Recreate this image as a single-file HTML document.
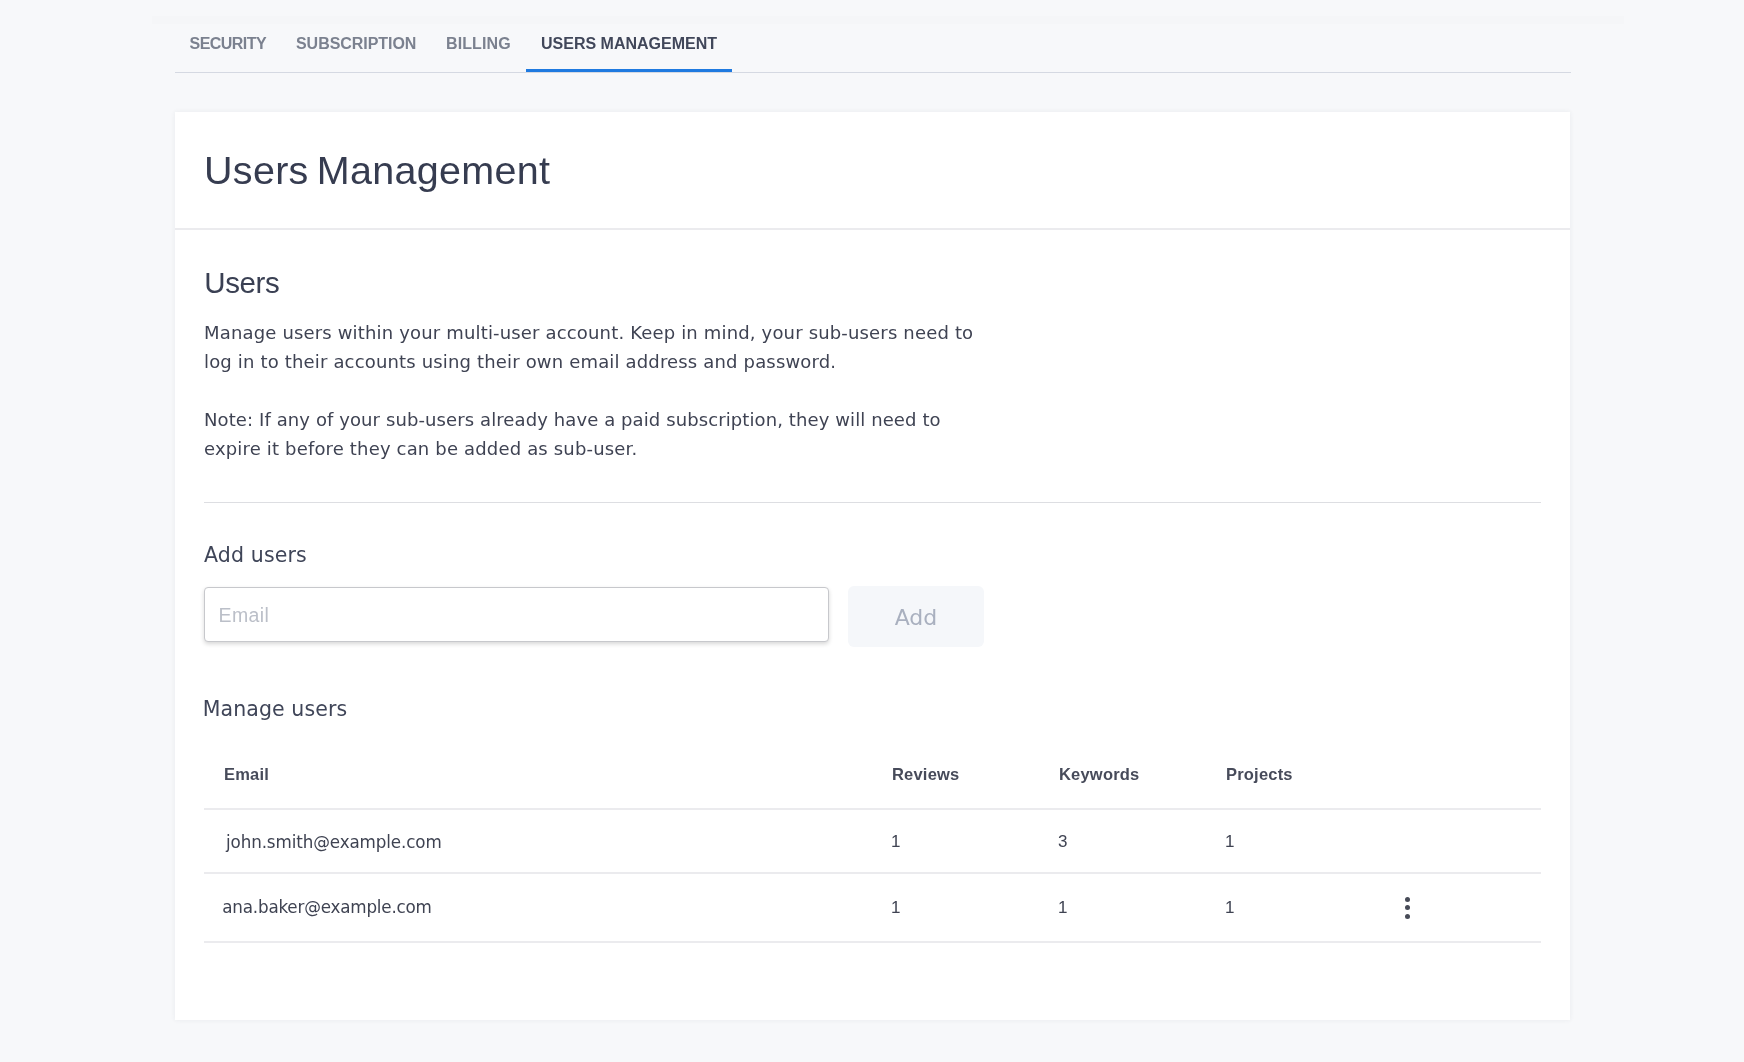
<!DOCTYPE html>
<html lang="en">
<head>
<meta charset="utf-8">
<title>Users Management</title>
<style>
*{box-sizing:border-box;margin:0;padding:0}
html,body{width:1744px;height:1062px;overflow:hidden}
body{background:#f7f8fa;font-family:"Liberation Sans",sans-serif;color:#3b4256;position:relative}
.abs{position:absolute;white-space:nowrap;line-height:1}
.band{position:absolute;left:152px;top:16px;width:1472px;height:8px;background:#f5f6f8}
/* tabs */
.tabs{position:absolute;left:175px;top:0;width:1396px;height:73px;border-bottom:1px solid #d5d9e2}
.tab{position:absolute;top:36px;font-size:16px;font-weight:700;color:#7b818f;line-height:16px;white-space:nowrap}
.tab.active{color:#41475a}
.tabbar{position:absolute;left:526px;top:69px;width:206px;height:3px;background:#1f7ae0}
/* card */
.card{position:absolute;left:175px;top:112px;width:1394.5px;height:908px;background:#fff;box-shadow:0 0 5px rgba(40,50,70,.07)}
.hline{position:absolute;height:2px;background:#ebebee}
h1{position:absolute;left:204px;top:147px;letter-spacing:.3px;word-spacing:-3.2px;font-size:39.5px;font-weight:400;color:#363c50;line-height:46px;white-space:nowrap}
h2{position:absolute;left:204.3px;top:265.5px;font-size:29.5px;letter-spacing:-.4px;font-weight:400;color:#3a4053;line-height:34px;white-space:nowrap}
h3{position:absolute;left:204px;font-family:"DejaVu Sans","Liberation Sans",sans-serif;font-size:20.5px;font-weight:400;color:#3f4558;line-height:26px;white-space:nowrap}
p.t{position:absolute;left:204px;font-family:"DejaVu Sans","Liberation Sans",sans-serif;letter-spacing:.165px;font-size:18px;line-height:29px;color:#3f4353;white-space:nowrap}
.input{position:absolute;left:204px;top:587px;width:625px;height:55px;border:1px solid #c7c8cc;border-radius:4px;background:#fff;box-shadow:0 2px 4px rgba(0,0,0,.16)}
.input span{position:absolute;left:13.5px;top:16px;font-size:19.5px;letter-spacing:.4px;line-height:22px;color:#bbbfc8}
.btn{position:absolute;left:848px;top:586px;width:136px;height:61px;border-radius:6px;background:#f5f7fa;color:#a9b0bf;font-family:"DejaVu Sans","Liberation Sans",sans-serif;font-size:22px;text-align:center;line-height:64px}
.th{position:absolute;top:764px;font-size:16.5px;letter-spacing:.2px;font-weight:700;color:#474b5a;line-height:20px;white-space:nowrap}
.td{position:absolute;font-family:"DejaVu Sans","Liberation Sans",sans-serif;font-size:16.75px;color:#3f4352;line-height:20px;white-space:nowrap}
.num{position:absolute;font-size:17px;color:#3f4352;line-height:20px;white-space:nowrap}
.dot{position:absolute;left:1405px;width:5px;height:5px;border-radius:50%;background:#474b57}
</style>
</head>
<body>
<div id="root" style="position:absolute;left:0;top:0;width:1744px;height:1062px;will-change:transform">
<div class="band"></div>
<div class="tabs"></div>
<div class="tab" style="left:189.6px;letter-spacing:-.55px">SECURITY</div>
<div class="tab" style="left:296px;letter-spacing:-.05px">SUBSCRIPTION</div>
<div class="tab" style="left:446px;letter-spacing:.1px">BILLING</div>
<div class="tab active" style="left:541px">USERS MANAGEMENT</div>
<div class="tabbar"></div>

<div class="card"></div>
<h1>Users Management</h1>
<div class="hline" style="left:175px;top:228px;width:1394.5px"></div>

<h2>Users</h2>
<p class="t" style="top:318px">Manage users within your multi-user account. Keep in mind, your sub-users need to</p>
<p class="t" style="top:347px">log in to their accounts using their own email address and password.</p>
<p class="t" style="top:405px;letter-spacing:.1px">Note: If any of your sub-users already have a paid subscription, they will need to</p>
<p class="t" style="top:434px">expire it before they can be added as sub-user.</p>
<div class="hline" style="left:204px;top:502px;width:1337px;height:1px;background:#dddee2"></div>

<h3 style="top:542px;letter-spacing:.15px">Add users</h3>
<div class="input"><span>Email</span></div>
<div class="btn">Add</div>

<h3 style="top:696px;left:202.7px;letter-spacing:.1px">Manage users</h3>
<div class="th" style="left:224px">Email</div>
<div class="th" style="left:892px">Reviews</div>
<div class="th" style="left:1059px">Keywords</div>
<div class="th" style="left:1226px">Projects</div>
<div class="hline" style="left:204px;top:808px;width:1337px"></div>

<div class="td" style="left:226px;top:831.6px;letter-spacing:-.12px">john.smith@example.com</div>
<div class="num" style="left:891px;top:832.3px">1</div>
<div class="num" style="left:1058px;top:832.3px">3</div>
<div class="num" style="left:1225px;top:832.3px">1</div>
<div class="hline" style="left:204px;top:872px;width:1337px"></div>

<div class="td" style="left:222.3px;top:897.4px;letter-spacing:-.2px">ana.baker@example.com</div>
<div class="num" style="left:891px;top:898.4px">1</div>
<div class="num" style="left:1058px;top:898.4px">1</div>
<div class="num" style="left:1225px;top:898.4px">1</div>
<div class="dot" style="top:897px"></div>
<div class="dot" style="top:905px"></div>
<div class="dot" style="top:914px"></div>
<div class="hline" style="left:204px;top:941px;width:1337px"></div>
</div>
</body>
</html>
